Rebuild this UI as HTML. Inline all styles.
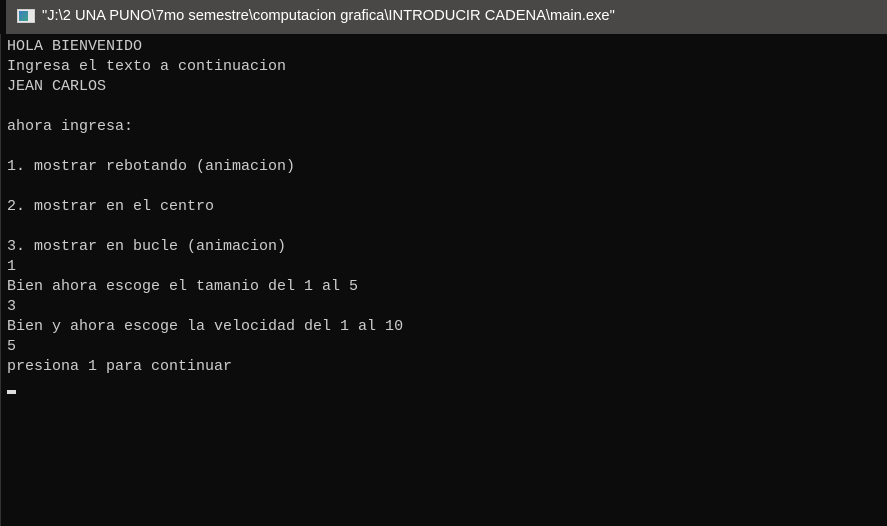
<!DOCTYPE html>
<html><head><style>
body{margin:0;width:887px;height:526px;background:#0c0c0c;overflow:hidden;position:relative}
.bar{position:absolute;left:6px;top:0;width:881px;height:34px;background:#4a4846}
.icon{position:absolute;left:11px;top:9px;width:16px;height:12px;background:#e8e8e8;border:1px solid #cfcfcf}
.icon i{position:absolute;left:1px;top:1px;width:9px;height:10px;background:linear-gradient(135deg,#3a7fbf,#3fa08a)}
.title{position:absolute;left:36px;top:8px;color:#fff;font:14.7px "Liberation Sans",sans-serif}
pre{position:absolute;left:7px;top:37px;margin:0;color:#cccccc;font:15px/20px "Liberation Mono",monospace}
.cur{position:absolute;left:7px;top:390px;width:9px;height:4px;background:#ddd}
.edge{position:absolute;left:0;top:34px;width:1px;height:492px;background:#333}
</style></head><body>
<div class="bar"><div class="icon"><i></i></div><div class="title">"J:\2 UNA PUNO\7mo semestre\computacion grafica\INTRODUCIR CADENA\main.exe"</div></div>
<div class="edge"></div>
<pre>HOLA BIENVENIDO
Ingresa el texto a continuacion
JEAN CARLOS

ahora ingresa:

1. mostrar rebotando (animacion)

2. mostrar en el centro

3. mostrar en bucle (animacion)
1
Bien ahora escoge el tamanio del 1 al 5
3
Bien y ahora escoge la velocidad del 1 al 10
5
presiona 1 para continuar</pre>
<div class="cur"></div>
</body></html>
